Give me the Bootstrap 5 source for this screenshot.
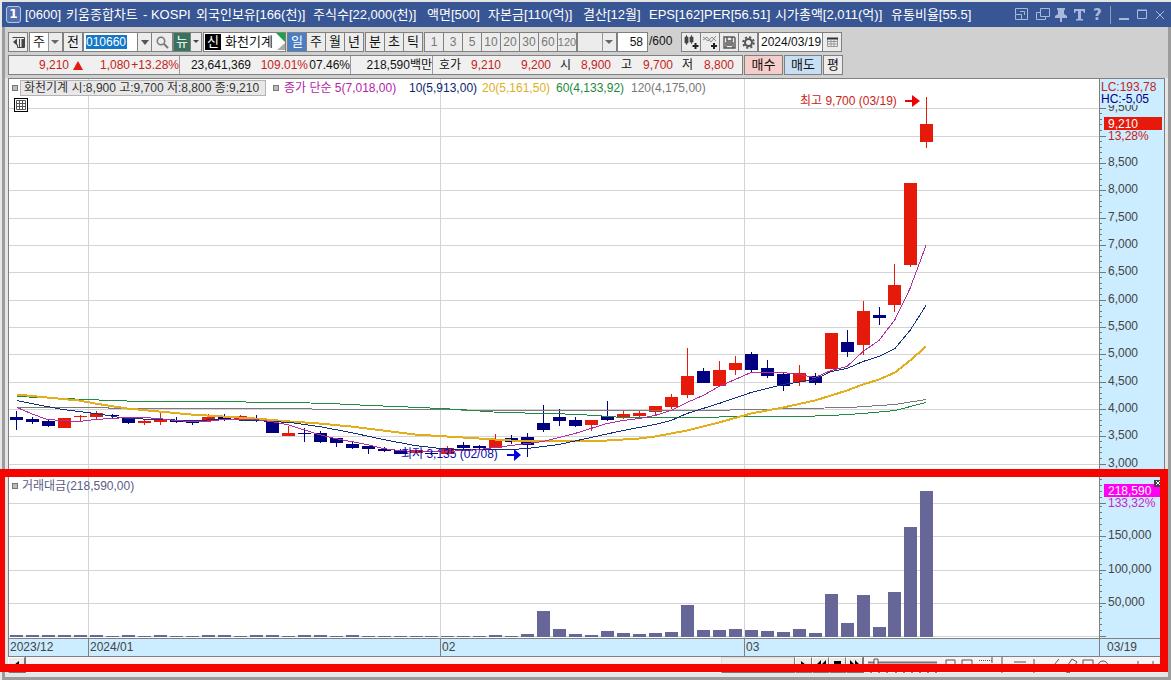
<!DOCTYPE html>
<html lang="ko">
<head>
<meta charset="utf-8">
<meta name="viewport" content="width=device-width, initial-scale=1">
<title>[0600] 키움종합차트</title>
<link href="https://cdn.jsdelivr.net/npm/bootstrap@5.3.0/dist/css/bootstrap.min.css" rel="stylesheet">
<style>
:root{--up:#e61a0a;--down:#000080;--edge:#808080;--axis:#ccecff;--num:#c62318}
body{font-family:"Liberation Sans","Noto Sans CJK KR",sans-serif;font-size:13px;line-height:18px;color:#111;background:#d9d9d9}
button,input,select{font:inherit;color:inherit;border-radius:0;padding:0;margin:0}
.app{min-height:100vh;border-top:2px solid #e4e4e4;border-left:2px solid #e8e8e8}
.titlebar{height:25px;background:#385693;color:#fff;padding:0 2px 0 4px}
.winno{width:15px;height:17px;border:1px solid #b9c8ea;border-radius:3px;background:#5470ae;font:bold 12px/15px "DejaVu Sans",sans-serif;text-align:center;margin-right:4px}
.caption-grid{display:grid;grid-template-columns:41px 77px 53px 117px 114px 61px 95px 66px 55px 71px 116px auto;font-size:13px;line-height:18px;white-space:nowrap}
.winbtn{border:0;background:none;width:18px;height:20px;display:flex;align-items:center;justify-content:center;color:#a9b9dd}
.help{font:bold 15px/20px "DejaVu Sans",sans-serif}
.frame{border:solid #9c9c9c;border-width:0 3px 3px}
.tools{background:#d0d0d0;padding:5px 3px 3px;gap:3px}
.strip{height:20px}
.tb{height:20px;border:1px solid var(--edge);background:#ececec;display:flex;align-items:center;justify-content:center;white-space:nowrap;overflow:hidden}
.w20{width:20px}.w19{width:19px}.w15{width:15px}.w12{width:12px}
.joined>.tb+.tb{margin-left:-1px}
.joined>.w19{width:20px}
.period-on{background:#4a7fc4;color:#fff}
.ticks>.tb{color:#777;font-size:12px}
.ticks>.tb:last-child{font-size:11px}
.pick{appearance:none;background:#fff url("data:image/svg+xml,%3Csvg xmlns='http://www.w3.org/2000/svg' width='14' height='18'%3E%3Cpath d='M0 0h14v18H0z' fill='%23ececec'/%3E%3Cpath d='M.5 0v18' stroke='%23999'/%3E%3Cpath d='M3 7h8l-4 4z' fill='%23666'/%3E%3C/svg%3E") right center no-repeat;padding-left:3px;display:block}
.pick-off{background-color:#ececec;opacity:.75}
.code{width:55px;background:#fff linear-gradient(#1478c8,#1478c8) 2px 2px/41px 14px no-repeat;color:#fff;padding-left:2px;font-size:12px}
.tag{background:#000;color:#fff;width:16px;height:16px;line-height:15px;text-align:center}
.fold{position:absolute;right:0;top:0}
.quotes{display:grid;height:20px;border:1px solid var(--edge);background:#f0f0f0;grid-template-columns:60px 15px 46px 50px 71px 57px 43px 82px 28px 40px 50px 20px 40px 21px 41px 20px 49px;font-size:12px;text-align:right;white-space:nowrap;color:var(--num)}
.quotes>.k{color:#111}
.quotes>.cut{border-right:1px solid #999}
.side{height:20px;border:1px solid var(--edge);line-height:18px}
.buy{background:#f6cdc8}.sell{background:#c7dff5}
.board{background:#e6e6e6;padding:0 3px 4px}
.pane{display:flex;border:1px solid var(--edge);border-bottom:0;background:#fff;position:relative}
.pane-price{height:391px}
.pane-volume{height:169px;border-top:0}
.plot{flex:1 1 0;min-width:0;overflow:hidden}
.plot svg,.scale svg{display:block;width:100%;height:100%;font-size:12px}
.plot polyline{shape-rendering:crispEdges}
.scale{flex:none;width:65px;border-left:1px solid var(--edge);background:var(--axis);overflow:hidden}
.legend{position:absolute;left:3px;top:1px;display:flex;align-items:center;font-size:12px;line-height:14px;white-space:nowrap}
.dot{width:6px;height:6px;border:1px solid #777;background:#bbb;flex:none}
.legend-box{border:1px solid #b4b4b4;background:#e8e8e8;color:#333;width:246px;padding:0 3px;margin:0 7px 0 2px}
.gridbtn{position:absolute;left:5px;top:19px;width:14px;height:14px;border:1px solid #000;background:#fff;display:flex;align-items:center;justify-content:center}
.marked{position:relative}
.marked::after{content:"";position:absolute;inset:0 -3px -15px -8px;border:8px solid #f40500;border-left-width:5px;pointer-events:none}
.dates{display:flex;height:19px;border:1px solid var(--edge);background:var(--axis);color:#444;font-size:12px;line-height:16px}
.dates>*{border-right:1px solid var(--edge);padding-left:1px}
.dates>:last-child{border-right:0;width:64px;padding-left:7px}
.foot{height:16px;background:#f7f2f5;overflow:hidden}
.raised{height:16px;width:17px;border:1px solid;border-color:#fff #777 #777 #fff;background:#ececec;display:flex;align-items:center;justify-content:center;box-shadow:1px 0 #777}
.thumb{width:74px;background:#ececec;border:1px solid;border-color:#ddd #777 #777 #ddd}
.foot-tools{width:302px}
#kind{width:34px;margin-left:1px!important}
.joined>.find{width:22px}
#news{background:#39735b;width:18px}
.stock{width:83px;padding-left:1px;margin-left:1px}
.stock+.joined,.unit,.ticks{margin-left:1px}
#minute{width:40px}
#count{width:31px;font-size:12px}
.total{width:33px;padding-left:1px;font-size:12px}
#day{width:65px;padding-left:2px;font-size:12px}
#buy{width:39px;margin-left:1px}
#sell{width:38px;margin-left:1px}
#avg{width:20px;margin-left:1px;background:#ececec}
.lg1{color:#b41ea8;width:125px;margin-left:5px}
.lg2{color:#0a246e;width:73px}
.lg3{color:#dcb01e;width:74px}
.lg4{color:#1b8a3c;width:75px}
.lg5{color:#777}
.vol{top:10px;color:#5c5c84}
.d1{width:80px}.d2{width:352px}.d3{width:304px}
</style>
</head>
<body>
<div class="app">
<header class="titlebar d-flex align-items-center">
  <span class="winno">1</span>
  <h1 class="caption-grid m-0 fw-normal"><span>[0600]</span><span>키움종합차트</span><span>- KOSPI</span><span>외국인보유[166(천)]</span><span>주식수[22,000(천)]</span><span>액면[500]</span><span>자본금[110(억)]</span><span>결산[12월]</span><span>EPS[162]</span><span>PER[56.51]</span><span>시가총액[2,011(억)]</span><span>유통비율[55.5]</span></h1>
  <div class="d-flex ms-auto align-items-center">
    <button class="winbtn" aria-label="축소"><svg width="13" height="13" fill="none" stroke="currentColor"><path d="M.5 6V.5h12v11H7M.5 6.500h6v5h-6zM5 3.500h4.500V7"/></svg></button>
    <button class="winbtn ms-1" aria-label="복제"><svg width="14" height="13" fill="none" stroke="currentColor"><path d="M4.500 .5h9v8h-9zM4 4.500H.5v7h9V9"/></svg></button>
    <button class="winbtn" aria-label="고정"><svg width="12" height="14" fill="currentColor"><path d="M2 0h8v2H9v4l3 2v2H7v4H5v-4H0V8l3-2V2H2z"/></svg></button>
    <button class="winbtn" aria-label="글꼴"><svg width="11" height="12" fill="currentColor"><path d="M0 0h11v4h-1L9 2H7v8h2v1.500H2V10h2V2H2L1 4H0z"/></svg></button>
    <button class="winbtn help" aria-label="도움말">?</button>
    <span class="border-start ms-1 opacity-50">&nbsp;</span>
    <button class="winbtn" aria-label="최소화"><svg width="10" height="12"><path d="M0 9h10v2H0z" fill="currentColor"/></svg></button>
    <button class="winbtn" aria-label="최대화"><svg width="10" height="11" fill="none" stroke="currentColor"><path d="M.5 1.500h9v8h-9zM0 1h10"/></svg></button>
    <button class="winbtn" aria-label="닫기"><svg width="10" height="10" stroke="currentColor"><path d="M1 1l8 8M9 1l-8 8"/></svg></button>
  </div>
</header>

<div class="frame">
<div class="tools d-flex flex-column">
  <div class="strip d-flex">
    <button class="tb w20" aria-label="패널"><svg width="13" height="13"><path d="M.5 1.500h12v10h-7v-3" fill="none" stroke="#444"/><path d="M5 2.500v7L1 6z" fill="#444"/><path d="M7 3h1v8H7zM9.500 3H12v9H9.500z" fill="#444"/></svg></button>
    <select class="tb pick" aria-label="종류" id="kind"><option>주</option></select>
    <button class="tb w20">전</button>
    <div class="d-flex joined">
      <input class="tb code" value="010660" aria-label="종목코드">
      <button class="tb w15" aria-label="목록"><svg width="8" height="5"><path d="M0 0h8L4 5z" fill="#555"/></svg></button>
      <button class="tb find" aria-label="검색"><svg width="13" height="13" fill="none" stroke="#777" stroke-width="1.500"><circle cx="5" cy="5" r="3.700"/><path d="M8 8l4 4" stroke-width="2"/></svg></button>
    </div>
    <div class="d-flex joined">
      <button class="tb text-white" id="news">뉴</button>
      <button class="tb w12" aria-label="뉴스 목록"><svg width="6" height="4"><path d="M0 0h6L3 3z" fill="#444"/></svg></button>
    </div>
    <div class="tb bg-white position-relative justify-content-start stock"><span class="tag">신</span><span class="ps-1">화천기계</span><svg class="fold" width="9" height="18"><path d="M0 0h9v9z" fill="#16a34a"/><path d="M9 10v7H1z" fill="#aaa"/></svg></div>
    <div class="d-flex joined"><button class="tb w20 period-on">일</button><button class="tb w19">주</button><button class="tb w19">월</button><button class="tb w19">년</button></div>
    <div class="d-flex joined unit"><button class="tb w19">분</button><button class="tb w19">초</button><button class="tb w19">틱</button></div>
    <div class="d-flex joined ticks"><button class="tb w19">1</button><button class="tb w19">3</button><button class="tb w19">5</button><button class="tb w19">10</button><button class="tb w19">20</button><button class="tb w19">30</button><button class="tb w19">60</button><button class="tb w19">120</button></div>
    <select class="tb pick pick-off" aria-label="분봉" id="minute" disabled><option></option></select>
    <input class="tb bg-white text-end px-1" id="count" value="58" aria-label="봉 개수"><label for="count" class="total">/600</label>
    <div class="d-flex joined">
      <button class="tb w19" aria-label="차트 추가"><svg width="15" height="14"><path d="M1 2h3v6H1zM2.500 0v10M6 2h3v5H6zM7.500 0v9" fill="#444" stroke="#444" stroke-width=".8"/><path d="M11.500 8v6M8.500 11h6" stroke="#222" stroke-width="2"/></svg></button>
      <button class="tb w19" aria-label="지표 추가"><svg width="15" height="14" fill="none" stroke="#777" stroke-width=".8"><path d="M0 5l4-3 4 5 5-6M0 2l5 4 4-4 4 4"/><path d="M11 8v6M8 11h6" stroke="#222" stroke-width="2"/></svg></button>
      <button class="tb w19" aria-label="저장"><svg width="13" height="13" fill="none" stroke="#555" stroke-width="1.400"><path d="M1 1h10l1 1v10H1zM4 1v4h5V1M3 12V7h7v5M4 9h5"/></svg></button>
      <button class="tb w20" aria-label="설정"><svg width="13" height="13" fill="none" stroke="#555"><circle cx="6.500" cy="6.500" r="3.500" stroke-width="2"/><circle cx="6.500" cy="6.500" r="5.300" stroke-width="2" stroke-dasharray="2.100 2.060"/></svg></button>
    </div>
    <div class="d-flex joined">
      <input class="tb bg-white" id="day" value="2024/03/19" aria-label="날짜">
      <button class="tb w20" aria-label="달력"><svg width="11" height="10" fill="none" stroke="#999"><path d="M.5 1.500h10v8H.5zM.5 4.500h10M.5 7h10M4 3v6M7 3v6"/><path d="M0 1.500h11" stroke="#333" stroke-width="2"/></svg></button>
    </div>
  </div>
  <div class="strip d-flex">
    <div class="quotes">
      <span>9,210</span><svg width="12" height="18" class="ms-1"><path d="M0 14L5 5l5 9z" fill="#e61a0a"/></svg><span>1,080</span><span class="cut">+13.28%</span>
      <span class="k">23,641,369</span><span>109.01%</span><span class="k cut">07.46%</span>
      <span class="k cut">218,590백만</span><span class="k">호가</span><span>9,210</span><span>9,200</span>
      <span class="k">시</span><span>8,900</span><span class="k">고</span><span>9,700</span><span class="k">저</span><span class="pe-2">8,800</span>
    </div>
    <button class="side buy" id="buy">매수</button><button class="side sell" id="sell">매도</button><button class="side" id="avg">평</button>
  </div>
</div>

<main class="board">
  <section class="pane pane-price" aria-label="가격 차트">
    <div class="plot"><svg id="price"></svg></div>
    <div class="scale"><svg id="priceScale"></svg></div>
    <div class="legend"><span class="dot"></span><span class="legend-box">화천기계 시:8,900 고:9,700 저:8,800 종:9,210</span><span class="dot"></span>
      <span class="lg1">종가 단순 5(7,018,00)</span><span class="lg2">10(5,913,00)</span><span class="lg3">20(5,161,50)</span><span class="lg4">60(4,133,92)</span><span class="lg5">120(4,175,00)</span></div>
    <button class="gridbtn" aria-label="표"><svg width="10" height="10" fill="none" stroke="#555"><path d="M.5 .5h9v9h-9zM.5 3.500h9M.5 6.500h9M3.500 0v10M6.500 0v10"/></svg></button>
  </section>
  <section class="marked" aria-label="거래대금">
    <div class="pane pane-volume">
      <div class="plot"><svg id="volume"></svg></div>
      <div class="scale"><svg id="volumeScale"></svg></div>
      <div class="legend vol"><span class="dot"></span><span class="ps-1">거래대금(218,590,00)</span></div>
    </div>
    <div class="dates"><span class="d1">2023/12</span><span class="d2">2024/01</span><span class="d3">02</span><span class="flex-grow-1">03</span><span>03/19</span></div>
  </section>
  <div class="foot d-flex">
    <button class="raised" aria-label="왼쪽"><svg width="5" height="8"><path d="M5 0v8L0 4z"/></svg></button>
    <div class="ms-auto thumb"></div>
    <button class="raised" aria-label="오른쪽"><svg width="5" height="8"><path d="M0 0v8l5-4z"/></svg></button>
    <button class="raised" aria-label="뒤로"><svg width="10" height="10"><path d="M5 0v10L0 5zM10 0v10L5 5z"/></svg></button>
    <button class="raised" aria-label="정지"><svg width="7" height="10"><path d="M0 1h7v8H0z"/></svg></button>
    <button class="raised" aria-label="앞으로"><svg width="10" height="10"><path d="M0 0v10l5-5zM5 0v10l5-5z"/></svg></button>
    <svg class="foot-tools" height="16" fill="none" stroke="#555"><path d="M5 5.500h69" stroke="#777" stroke-width="2"/><path d="M11 2h4v8h-4z" fill="#eee"/><path d="M8 12v4m8-4v4m8-4v4m9-4v4m8-4v4m8-4v4m8-4v4m8-4v4m8-4v4" stroke="#111"/><path d="M83 3h9v11h-9zM99 3h10v11h-10zM129 0v6M139 0v16M151 5h12M171 2v14M186 14l10-12M201 14l8-12 5 3-8 11zM220 3h10v11h-10zM235 9a5 5 0 0 1 10 0M275 4v6M290 4v6"/><path d="M116 3.500h13" stroke-dasharray="1 1"/></svg>
  </div>
</main>
</div>
</div>
<script src="https://cdn.jsdelivr.net/npm/bootstrap@5.3.0/dist/js/bootstrap.bundle.min.js"></script>
<script>
const X0=9, Y0=79, YV=469, NS='http://www.w3.org/2000/svg';
const add=(id,tag,attrs,text)=>{const e=document.createElementNS(NS,tag);for(const k in attrs)e.setAttribute(k,attrs[k]);if(text)e.textContent=text;document.getElementById(id).appendChild(e)};
const rect=(id,x,y,w,h,fill)=>add(id,'rect',{x,y,width:w,height:h,fill});
const label=(id,x,y,fill,text)=>add(id,'text',{x,y,fill},text);
const cx=i=>Math.round(16.4+15.965*i)-X0;
// body top, body bottom, high, low, rising
const candles=[[417,420,411,430,0],[419,422,417,424,0],[421,426,420,427,0],[418,428,418,428,1],[416,417,415,421,1],[413,417,411,419,1],[415,416,414,418,0],[417,423,417,424,0],[421,423,420,425,1],[419,422,412,425,1],[420,422,417,423,0],[421,423,420,425,0],[417,421,414,422,1],[417,419,414,421,0],[416,420,415,421,1],[418,421,415,422,0],[421,433,419,433,0],[433,436,426,436,1],[433,434,428,442,0],[433,442,431,443,0],[438,443,438,447,0],[444,448,442,449,0],[446,449,446,454,0],[449,451,447,452,0],[450,454,449,454,0],[450,453,450,453,1],[453,454,452,455,0],[448,454,446,455,1],[445,448,442,449,0],[446,448,445,450,0],[439,448,434,448,1],[438,442,435,444,0],[437,445,433,457,0],[423,430,405,432,0],[417,421,409,426,0],[420,426,417,427,0],[420,425,420,431,1],[416,420,401,421,0],[414,418,411,419,1],[413,416,411,418,1],[406,412,406,416,1],[397,407,394,409,1],[376,395,348,398,1],[371,383,368,383,0],[370,386,361,386,1],[363,370,356,375,1],[354,370,352,373,0],[368,376,360,378,0],[374,386,372,391,0],[373,382,365,386,1],[376,383,373,385,0],[333,369,333,369,1],[342,352,330,357,0],[311,345,301,355,1],[315,318,307,325,0],[285,305,264,312,1],[183,265,183,267,1],[124,142,97,148,1]];
const averages=[
 ['#7a7a7a',1,'17,407 200,408 420,409 500,410 580,410 710,410 750,409 800,408 850,407 895,404 926,399'],
 ['#1f8a40',1,'17,396 63,398 111,400 143,401 200,401 290,402 330,403 370,405 420,407 460,409 500,412 550,413 580,414 623,417 687,417 751,416 800,416 831,415 863,413 895,410 926,402'],
 ['#e2ae1c',2,'17,394 47,397 79,400 95,403 127,408 159,411 191,414 223,416 255,418 290,421 319,423 351,426 383,430 415,434 447,436 479,438 511,440 580,441 607,440 639,438 655,436 687,430 719,422 751,413 783,407 815,400 831,395 847,390 863,384 879,379 895,372 910,360 926,346'],
 ['#12307c',1,'17,400 31,403 63,409 95,413 127,418 159,419 191,420 223,419 255,420 290,422 319,426 351,432 383,439 415,445 440,448 463,449 511,449 527,448 559,444 591,437 623,430 655,424 671,420 687,413 719,403 751,392 783,384 815,379 831,371 847,368 863,361 879,356 895,348 910,330 926,305'],
 ['#b030a0',1,'17,407 31,413 47,419 63,420 79,421 95,419 111,418 127,417 143,417 159,418 175,420 191,421 207,421 223,419 239,419 255,419 271,421 287,424 303,429 319,434 335,438 351,441 367,444 383,448 399,450 415,451 431,451 447,451 463,450 479,449 495,447 511,445 527,443 543,441 559,437 575,433 591,428 607,423 623,420 639,418 655,415 671,410 687,402 703,395 719,386 735,379 751,372 783,372 799,374 815,377 831,370 847,366 863,351 879,340 895,319 910,288 926,245']];
const months=[88,440,744];
const levels=[108,136,163,190,218,245,272,300,327,354,382,409,436,464];
levels.forEach((y,i)=>{
  rect('price',0,y-Y0,'100%',1,'#d4d4d4'); rect('priceScale',0,y-Y0,6,1,'#777');
  for(let k=1;k<5;k++) rect('priceScale',0,Math.round(y+k*5.48)-Y0,2,1,'#777');
  if(i!==1) label('priceScale',8,y-Y0+3,'#444',(9500-500*i).toLocaleString('en-US'));
});
months.forEach(x=>{rect('price',x-X0,0,1,'100%','#d4d4d4');rect('volume',x-X0,0,1,'100%','#d4d4d4')});
candles.forEach(([t,b,h,l,up],i)=>{const c=up?'#e61a0a':'#000080';rect('price',cx(i),h-Y0,1,l-h,c);rect('price',cx(i)-6,t-Y0,13,b-t,c)});
averages.forEach(([stroke,w,pts])=>add('price','polyline',{points:pts.split(' ').map(p=>{const[a,b]=p.split(',');return(a-X0)+','+(b-Y0+.5)}).join(' '),fill:'none',stroke,'stroke-width':w}));
label('price',791,26,'#c81e14','최고 9,700 (03/19)');
add('price','path',{d:'M896 21h7v-5l8 6-8 6v-5h-7z',fill:'#f00000'});
label('price',392,379,'#0a0aa8','최저 3,135 (02/08)');
add('price','path',{d:'M498 375h7v-5l7 6-7 6v-5h-7z',fill:'#0000e0'});
rect('priceScale',0,0,64,26,'#ccecff');
label('priceScale',1,12,'#c62318','LC:193,78'); label('priceScale',1,24,'#000080','HC:-5,05');
rect('priceScale',4,38,58,13,'#e61a0a'); label('priceScale',8,49,'#fff','9,210'); label('priceScale',8,61,'#c62318','13,28%');

[503,536,570,603,636].forEach((y,i)=>{
  rect('volume',0,y-YV,'100%',1,'#d4d4d4'); rect('volumeScale',0,y-YV,6,1,'#777');
  for(let k=1;k<6;k++) rect('volumeScale',0,y-YV-k*6,2,1,'#777');
  if(i>0&&i<4) label('volumeScale',8,y-YV+3,'#444',(200000-50000*i).toLocaleString('en-US'));
});
const bars=[2,2,2,2,2,2,1,2,1,2,1,1,2,2,1,2,2,1,2,2,1,2,1,1,1,1,1,1,1,1,2,1,3,26,8,3,2,6,4,3,4,5,32,7,7,8,7,6,5,8,4,43,14,42,10,45,110,146];
bars.forEach((h,i)=>rect('volume',cx(i)-6,168-h,13,h,'#666699'));
rect('volumeScale',4,15,60,13,'#ff00f0'); label('volumeScale',8,26,'#fff','218,590'); label('volumeScale',8,38,'#c81ec8','133,32%');
rect('volumeScale',54,11,8,7,'#444'); add('volumeScale','path',{d:'M56 12l4 4m0-4l-4 4',stroke:'#fff'});
</script>
</body>
</html>
